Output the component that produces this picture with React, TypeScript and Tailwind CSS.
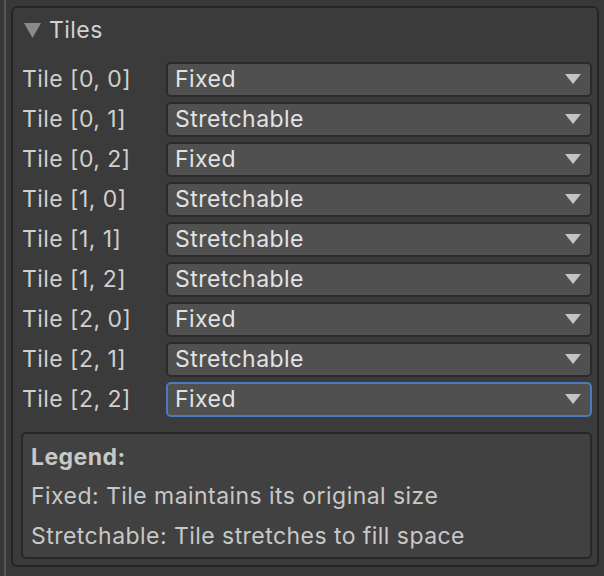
import React from 'react';

const tiles: { label: string; value: string; focused?: boolean }[] = [
  { label: 'Tile [0, 0]', value: 'Fixed' },
  { label: 'Tile [0, 1]', value: 'Stretchable' },
  { label: 'Tile [0, 2]', value: 'Fixed' },
  { label: 'Tile [1, 0]', value: 'Stretchable' },
  { label: 'Tile [1, 1]', value: 'Stretchable' },
  { label: 'Tile [1, 2]', value: 'Stretchable' },
  { label: 'Tile [2, 0]', value: 'Fixed' },
  { label: 'Tile [2, 1]', value: 'Stretchable' },
  { label: 'Tile [2, 2]', value: 'Fixed', focused: true },
];

const Caret = () => (
  <svg width="16" height="10" viewBox="0 0 16 10" className="shrink-0">
    <path d="M0 0 H16 L8 10 Z" fill="#c4c4c4" />
  </svg>
);

export default function App() {
  return (
    <div
      className="flex h-[576px] w-[604px] bg-[#383838] text-[#d2d2d2] tracking-[0.45px]"
      style={{ fontFamily: 'Inter, "Noto Sans", sans-serif' }}
    >
      <div className="w-[4px]" />
      <div className="w-[2px] bg-[#565656]" />
      <div className="flex flex-1 pt-[6px] pl-[5px] pr-[5px] pb-[9px]">
        <div className="flex flex-1 flex-col rounded-[6px] border-2 border-[#252525] bg-[#3b3b3b] pl-[8px] pr-[5px]">
          {/* header */}
          <div className="flex h-[44px] items-center gap-[8px] pl-[3px]">
            <svg width="17" height="15" viewBox="0 0 17 15">
              <path d="M0 0 H17 L8.5 15 Z" fill="#8a8a8a" />
            </svg>
            <span className="text-[23px] leading-none">Tiles</span>
          </div>

          <div className="mt-[7px] flex flex-col">
            {tiles.map((t) => (
              <div key={t.label} className="flex h-[40px] items-center">
                <span className="w-[145px] pl-[1px] text-[23px] leading-none text-[#cfcfcf]">{t.label}</span>
                <div
                  className={`flex h-[35px] flex-1 items-center justify-between rounded-[5px] border-2 bg-[#505050] pl-[7px] pr-[9px] ${
                    t.focused ? 'border-[#4b7ac2]' : 'border-[#2a2a2a]'
                  }`}
                >
                  <span className="text-[23px] leading-none text-[#e2e2e2]">{t.value}</span>
                  <Caret />
                </div>
              </div>
            ))}
          </div>

          {/* legend */}
          <div className="mt-[13px] flex flex-col rounded-[5px] border-2 border-[#272727] bg-[#414141] pl-[8px] pt-[12px] pb-[9px] text-[23px] leading-none text-[#c8c8c8]">
            <span className="font-bold">Legend:</span>
            <span className="mt-[16px]">Fixed: Tile maintains its original size</span>
            <span className="mt-[17px]">Stretchable: Tile stretches to fill space</span>
          </div>
        </div>
      </div>
    </div>
  );
}
